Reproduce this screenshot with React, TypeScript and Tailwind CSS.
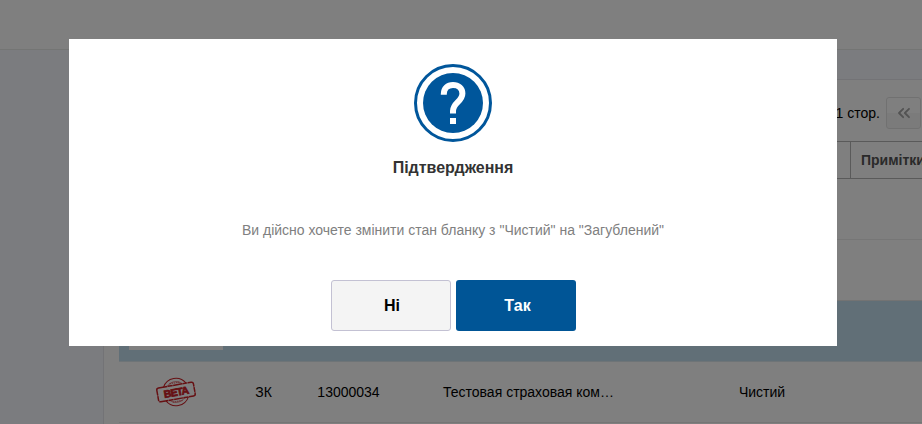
import { ChevronsLeft } from 'lucide-react';

interface Blank {
  series: string;
  number: string;
  company: string;
  state: string;
}

const blank: Blank = {
  series: 'ЗК',
  number: '13000034',
  company: 'Тестовая страховая ком…',
  state: 'Чистий',
};

const BetaStamp = () => (
  <svg width="42" height="32" viewBox="0 0 42 32" fill="none" stroke="#cc2026">
    <g transform="rotate(-10 21 16)">
      <path d="M9.6 9a13 13 0 0 1 22.8 0M9.6 23a13 13 0 0 0 22.8 0" strokeWidth="1" />
      <path d="M13 9.3a10.5 10.5 0 0 1 16 0M13 22.7a10.5 10.5 0 0 0 16 0" strokeWidth="0.5" />
      <path d="M16 6.8h10M16 25.4h10" strokeWidth="1.3" strokeDasharray="1.5 0.7" opacity="0.6" />
      <rect x="2.4" y="9" width="37.2" height="14" rx="2" strokeWidth="1.5" strokeDasharray="9 0.5 5 0.4" />
      <text
        x="8.6"
        y="19.8"
        textLength="25"
        fill="#cc2026"
        strokeWidth="0.7"
        className="font-['Liberation_Sans',sans-serif] text-[10.5px] font-bold tracking-[-0.5px]"
      >
        BETA
      </text>
    </g>
  </svg>
);

const BlanksPage = () => (
  <div className="h-full bg-[#f7f9ff]">
    <header className="h-[50px] border-b border-[#e8ebe8] bg-white" />
    <main className="ml-[103px] mt-[29px] h-[400px] w-[900px] border-l border-t border-[#e6e7ec] bg-white pl-[15px] pt-4">
      <div className="flex h-[34px] w-[802px] items-center justify-end gap-[6px]">
        <span>1 стор.</span>
        <button className="flex h-8 w-[35px] items-center justify-center rounded-[3px] border border-[#e2e2e2] bg-[linear-gradient(#fff_50%,#f6f6f6_50%)] text-[#a6a6a6]">
          <ChevronsLeft className="h-[20px] w-[20px]" strokeWidth={2.2} />
        </button>
      </div>
      <div className="mt-[11px] flex h-[38px] border-y border-[#b4b4b4] font-bold text-[#555]">
        <div className="w-[732px] border-r border-[#b4b4b4]" />
        <div className="flex items-center pl-[10px]">Примітки</div>
      </div>
      <div className="h-[61px] border-b border-[#ededed]" />
      <div className="h-[61px] border-b border-[#e6e6e6]" />
      <div className="h-[61px] border-b border-[#dce9ee] bg-[#c3dfef] pl-[10px]">
        <div className="h-[49px] w-[94px] bg-white" />
      </div>
      <div className="flex h-[61px] items-center border-b border-[#ebebeb] text-center">
        <div className="flex w-[114px] justify-center"><BetaStamp /></div>
        <div className="w-[61px]">{blank.series}</div>
        <div className="w-[109px]">{blank.number}</div>
        <div className="mr-[20px] w-[251px]">{blank.company}</div>
        <div className="w-[176px]">{blank.state}</div>
      </div>
    </main>
  </div>
);

const QuestionIcon = () => (
  <svg width="78" height="78" viewBox="0 0 78 78" fill="none">
    <circle cx="39" cy="39" r="37.5" stroke="#00569b" strokeWidth="3" />
    <circle cx="39" cy="39" r="30" fill="#00569b" />
    <path
      d="M29.8 30.8V30C29.8 24.6 33.6 21 39 21S48.4 24.4 48.4 29.6C48.4 37.8 39 38.6 39 47V49.6"
      stroke="#fff"
      strokeWidth="6"
    />
    <path d="M36 54h6v6h-6z" fill="#fff" />
  </svg>
);

const ConfirmDialog = () => (
  <div role="dialog" className="absolute left-[69px] top-[39px] flex h-[307px] w-[768px] flex-col items-center bg-white pt-[25px]">
    <QuestionIcon />
    <h2 className="mt-[14px] text-base font-bold leading-6 text-[#333]">Підтвердження</h2>
    <p className="mt-10 leading-5 text-[#808080]">
      Ви дійсно хочете змінити стан бланку з "Чистий" на "Загублений"
    </p>
    <div className="mt-10 flex gap-[5px] text-base font-bold">
      <button className="h-[51px] w-[120px] rounded-[3px] border border-[#c3c1d3] bg-[#f4f4f4] pl-[3px] text-black">Ні</button>
      <button className="h-[51px] w-[120px] rounded-[3px] bg-[#005596] pl-1 text-white">Так</button>
    </div>
  </div>
);

export default function App() {
  return (
    <div className="relative h-[424px] w-[922px] overflow-hidden font-['Liberation_Sans',Arial,sans-serif] text-sm text-black">
      <BlanksPage />
      <div className="absolute inset-0 bg-black/50" />
      <ConfirmDialog />
    </div>
  );
}
